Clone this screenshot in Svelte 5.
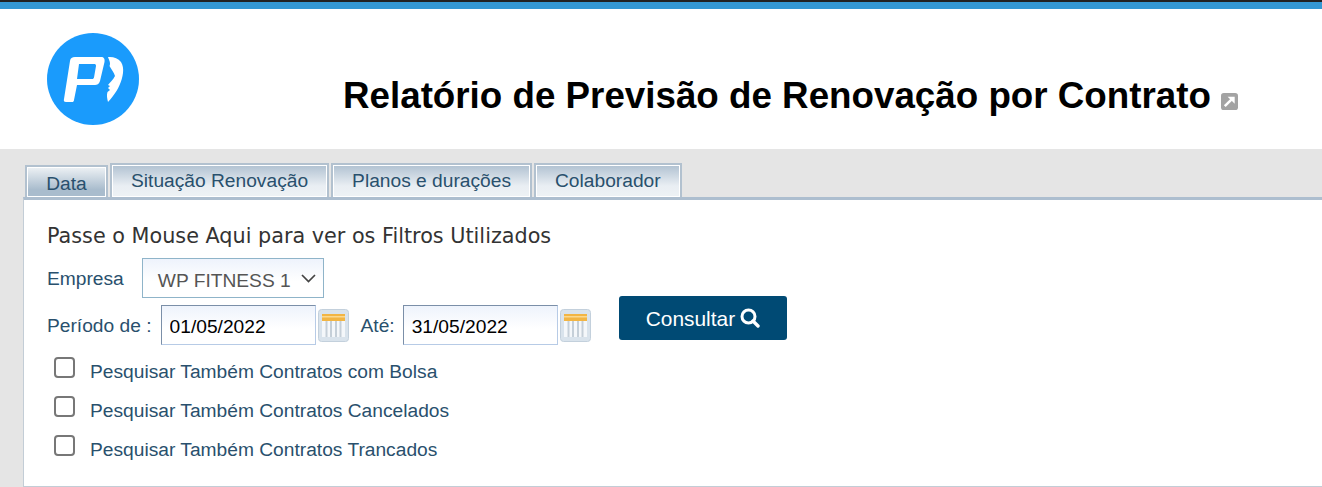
<script>
  let filters = [
    'Pesquisar Também Contratos com Bolsa',
    'Pesquisar Também Contratos Cancelados',
    'Pesquisar Também Contratos Trancados',
  ];
  let tabs = ['Situação Renovação', 'Planos e durações', 'Colaborador'];
</script>

{#snippet calendar()}
  <svg class="cal" width="31" height="33" viewBox="0 0 31 33">
    <rect x="0.5" y="0.5" width="30" height="32" rx="3" fill="#d9e3ec" stroke="#c3d0dc" />
    <rect x="4" y="5" width="23" height="7" fill="#f2b544" />
    <rect x="4" y="7" width="23" height="1.5" fill="#fbd98f" />
    <rect x="4" y="12" width="23" height="16" fill="#f4f7fa" />
    <path d="M8.5 12v16M13 12v16M18 12v16M22.5 12v16" stroke="#c5cfd8" stroke-width="2" />
  </svg>
{/snippet}

<div class="page">
  <div class="topbar"></div>

  <header class="header">
    <svg class="logo" width="92" height="92" viewBox="0 0 92 92">
      <circle cx="46" cy="46" r="46" fill="#1a9bfc" />
      <path
        fill="#fff"
        fill-rule="evenodd"
        d="M28 24H54C57 24 58 26 57.5 29L53 48C52 51 50 52 48 52H30L27 67C27 68.5 26 69 25 69H19C17 69 16.5 68 17 66L23 28C23.5 25 25 24 28 24ZM32 31L30 46H45C46 46 46.5 45.5 47 44.5L49 33C49 31.5 48.5 31 47 31Z"
      />
      <path
        fill="#fff"
        d="M61 24C66 23.5 71 25 74 29C76 32 76.5 36 76 40C75 48 71 57 66 63C64.5 65 63 67 61 69C60 65 59.5 62 60.5 59L63 57L61 55L63 53L61 52C63 49 66 47 68 43C67 39 64 36 62.5 33C64 30 62 27 61 24Z"
      />
    </svg>
    <h1 class="title">Relatório de Previsão de Renovação por Contrato</h1>
    <svg class="popout" width="17" height="17" viewBox="0 0 18 18">
      <rect width="18" height="18" rx="3" fill="#a3a3a3" />
      <path d="M4 14l7-7" stroke="#fff" stroke-width="2.6" />
      <path d="M7 4h7.5v7.5z" fill="#fff" />
    </svg>
  </header>

  <main class="content">
    <nav class="tabs">
      <button class="tab active">Data</button>
      {#each tabs as tab}
        <button class="tab">{tab}</button>
      {/each}
    </nav>

    <section class="panel">
      <p class="hint">Passe o Mouse Aqui para ver os Filtros Utilizados</p>

      <div class="row company">
        <span class="label">Empresa</span>
        <div class="select">
          <span class="select-value">WP FITNESS 1</span>
          <svg width="15" height="9" viewBox="0 0 15 9">
            <path d="M1 1l6.5 6.5L14 1" fill="none" stroke="#444" stroke-width="1.7" />
          </svg>
        </div>
      </div>

      <div class="row period">
        <span class="label">Período de :</span>
        <input class="date" value="01/05/2022" />
        {@render calendar()}
        <span class="label until">Até:</span>
        <input class="date" value="31/05/2022" />
        {@render calendar()}
        <button class="search">
          <span class="search-text">Consultar</span>
          <svg width="20" height="20" viewBox="0 0 20 20">
            <circle cx="8.5" cy="8.5" r="6.5" fill="none" stroke="#fff" stroke-width="3" />
            <path d="M13 13l5 5" stroke="#fff" stroke-width="3.4" stroke-linecap="round" />
          </svg>
        </button>
      </div>

      <div class="checks">
        {#each filters as filter}
          <label class="check">
            <span class="box"></span>
            <span class="check-text">{filter}</span>
          </label>
        {/each}
      </div>
    </section>
  </main>
</div>

<style>
  :global(body) {
    margin: 0;
    background: #fff;
  }

  .page {
    height: 487px;
    overflow: hidden;
    font-family: 'Liberation Sans', Arial, sans-serif;
    color: #29506d;
  }

  .topbar {
    height: 7px;
    background: #3498d3;
    border-top: 2px solid #222;
  }

  .header {
    height: 140px;
    display: flex;
    align-items: flex-start;
    background: #fff;
  }

  .logo {
    margin: 24px 0 0 47px;
    flex-shrink: 0;
  }

  .title {
    margin: 63px 0 0 204px;
    font-size: 36.75px;
    line-height: 48px;
    font-weight: 700;
    color: #000;
    white-space: nowrap;
  }

  .popout {
    margin: 84px 0 0 10px;
  }

  .content {
    height: 338px;
    padding-top: 14px;
    background: #e5e5e5;
  }

  .tabs {
    display: flex;
    align-items: flex-end;
    gap: 2px;
    margin-left: 25px;
    height: 34px;
  }

  .tab {
    box-sizing: border-box;
    height: 34px;
    padding: 0 19px 1px;
    border: 2px solid #b2c1cf;
    border-bottom: 0;
    box-shadow: inset 0 0 0 1px #fff;
    background: linear-gradient(#b0c1d1, #e9eef3 65%, #eef2f5);
    font: 19.2px 'Liberation Sans', Arial, sans-serif;
    color: #29506d;
  }

  .tab.active {
    height: 32px;
    width: 83px;
    padding: 4px 0 0;
    background: linear-gradient(#eef2f5, #a9bccd 75%);
  }

  .panel {
    box-sizing: border-box;
    height: 290px;
    margin-left: 23px;
    padding: 22px 0 0 23px;
    background: #fff;
    border-top: 3px solid #adbecf;
    border-left: 1px solid #c3cdd6;
    border-bottom: 1px solid #c3cdd6;
  }

  .hint {
    margin: 0;
    font: 20.75px/28px 'DejaVu Sans', sans-serif;
    color: #333;
  }

  .row {
    display: flex;
    align-items: center;
  }

  .company {
    margin-top: 8px;
  }

  .label {
    padding-top: 2px;
    font-size: 19.2px;
    color: #29506d;
  }

  .select {
    display: flex;
    align-items: center;
    justify-content: space-between;
    box-sizing: border-box;
    width: 182px;
    height: 40px;
    margin-left: 18px;
    padding: 0 7px 0 15px;
    border: 1px solid #8fb4c9;
    background: linear-gradient(#eef3fc, #fff 60%);
    font-size: 19.2px;
    color: #555;
  }

  .select-value {
    padding-top: 5px;
  }

  .period {
    margin-top: 7px;
  }

  .date {
    box-sizing: border-box;
    width: 155px;
    height: 40px;
    margin-left: 9px;
    padding: 3px 0 0 8px;
    border: 1px solid;
    border-color: #7b8fa8 #b7cbe6 #b7cbe6 #7b8fa8;
    background: linear-gradient(#eef3fc, #fff 60%);
    font: 19.2px 'Liberation Sans', Arial, sans-serif;
    color: #000;
    outline: none;
  }

  .cal {
    margin-left: 2px;
    flex-shrink: 0;
  }

  .until {
    margin: 0 -1px 0 12px;
  }

  .search {
    display: flex;
    align-items: center;
    gap: 5px;
    height: 44px;
    margin: -14px 0 0 28px;
    padding: 0 27px;
    border: 0;
    border-radius: 3px;
    background: #004a74;
    color: #fff;
    font: 20.9px 'Liberation Sans', Arial, sans-serif;
  }

  .search-text {
    padding-top: 2px;
  }

  .checks {
    display: flex;
    flex-direction: column;
    gap: 13px;
    margin-top: 12px;
  }

  .check {
    display: flex;
    align-items: flex-start;
    margin-left: 7px;
  }

  .box {
    box-sizing: border-box;
    width: 21px;
    height: 21px;
    border: 2px solid #777;
    border-radius: 4px;
    background: #fff;
  }

  .check-text {
    margin: 4px 0 0 15px;
    font-size: 19.2px;
    line-height: 22px;
    color: #29506d;
  }
</style>
